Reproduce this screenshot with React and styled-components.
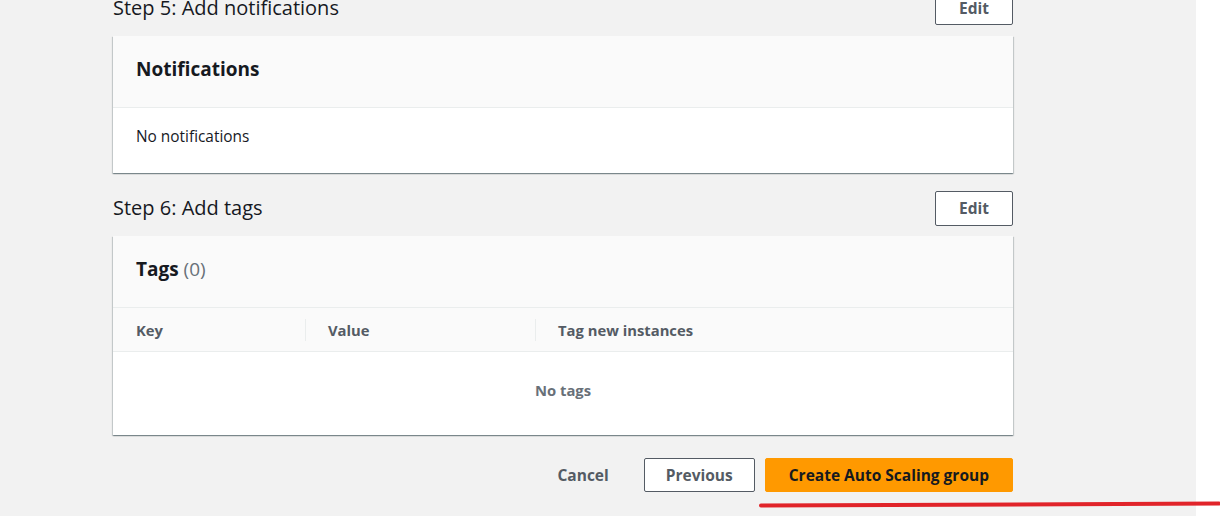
import React from "react";
import styled, { createGlobalStyle } from "styled-components";

const GlobalStyle = createGlobalStyle`
  html, body {
    margin: 0;
    padding: 0;
    height: 100%;
    overflow: hidden;
    background: #ffffff;
  }
  #root {
    height: 100%;
  }
  * {
    box-sizing: border-box;
  }
`;

const Layout = styled.div`
  position: relative;
  display: flex;
  height: 516px;
  font-family: "Open Sans", "Noto Sans", sans-serif;
  color: #16191f;
`;

const Main = styled.main`
  flex: 1;
  background: #f2f2f2;
  overflow: hidden;
`;

const SideStrip = styled.div`
  width: 24px;
  background: #ffffff;
`;

const Column = styled.div`
  width: 900px;
  margin: -9px 0 0 113px;
  display: flex;
  flex-direction: column;
  gap: 18px;
`;

const Section = styled.section`
  display: flex;
  flex-direction: column;
  gap: 11px;
`;

const SectionHead = styled.div`
  display: flex;
  align-items: center;
  justify-content: space-between;
  height: 34px;
`;

const StepTitle = styled.h2`
  margin: 0;
  font-size: 20px;
  font-weight: 400;
  line-height: 24px;
  color: #16191f;
`;

const Button = styled.button`
  height: ${(p) => (p.$tall ? "35px" : "34px")};
  padding: 0 ${(p) => (p.$pad ? p.$pad : 23)}px;
  border-radius: 2px;
  border: 1px solid ${(p) => (p.$primary ? "#ff9900" : p.$link ? "transparent" : "#545b64")};
  background: ${(p) => (p.$primary ? "#ff9900" : p.$link ? "transparent" : "#ffffff")};
  color: ${(p) => (p.$primary ? "#16191f" : "#545b64")};
  font-family: "Open Sans", "Noto Sans", sans-serif;
  font-size: 15.5px;
  font-weight: 700;
  line-height: 20px;
  cursor: pointer;
`;

const Card = styled.div`
  background: #ffffff;
  box-shadow: 0 1px 1px 0 rgba(0, 28, 36, 0.3), 1px 1px 1px 0 rgba(0, 28, 36, 0.15),
    -1px 1px 1px 0 rgba(0, 28, 36, 0.15);
`;

const CardHeader = styled.div`
  height: 72px;
  padding: 19px 23px 0;
  background: #fafafa;
  border-bottom: 1px solid #eaeded;
`;

const CardTitle = styled.h3`
  margin: 0;
  font-size: 19px;
  font-weight: 700;
  line-height: 28px;
  color: #16191f;
`;

const Count = styled.span`
  font-weight: 400;
  color: #687078;
`;

const CardBody = styled.div`
  height: 65px;
  padding: 19px 23px 0;
  font-size: 15.4px;
  line-height: 20px;
  color: #16191f;
`;

const TableHead = styled.div`
  display: grid;
  grid-template-columns: 192px 230px 1fr;
  height: 44px;
  align-items: center;
  border-bottom: 1px solid #eaeded;
  background: #fafafa;
`;

const HeadCell = styled.div`
  padding-left: 22px;
  font-size: 14.8px;
  font-weight: 700;
  line-height: 20px;
  color: #545b64;
  border-left: 1px solid ${(p) => (p.$divider ? "#eaeded" : "transparent")};
  height: 22px;
  display: flex;
  align-items: center;
`;

const EmptyRow = styled.div`
  height: 83px;
  padding-top: 28px;
  text-align: center;
  font-size: 14.8px;
  font-weight: 700;
  line-height: 20px;
  color: #687078;
`;

const Footer = styled.div`
  display: flex;
  justify-content: flex-end;
  align-items: center;
  gap: 10px;
  margin-top: 5px;
`;

const CancelWrap = styled.div`
  margin-right: 4px;
`;

const Annotation = styled.svg`
  position: absolute;
  left: 0;
  top: 0;
  pointer-events: none;
`;

export default function App() {
  return (
    <>
      <GlobalStyle />
      <Layout>
        <Main>
          <Column>
            <Section>
              <SectionHead>
                <StepTitle>Step 5: Add notifications</StepTitle>
                <Button>Edit</Button>
              </SectionHead>
              <Card>
                <CardHeader>
                  <CardTitle>Notifications</CardTitle>
                </CardHeader>
                <CardBody>No notifications</CardBody>
              </Card>
            </Section>

            <Section>
              <SectionHead>
                <StepTitle>Step 6: Add tags</StepTitle>
                <Button $tall>Edit</Button>
              </SectionHead>
              <Card>
                <CardHeader>
                  <CardTitle>
                    Tags <Count>(0)</Count>
                  </CardTitle>
                </CardHeader>
                <TableHead>
                  <HeadCell>Key</HeadCell>
                  <HeadCell $divider>Value</HeadCell>
                  <HeadCell $divider>Tag new instances</HeadCell>
                </TableHead>
                <EmptyRow>No tags</EmptyRow>
              </Card>
            </Section>

            <Footer>
              <CancelWrap>
                <Button $link $pad={20}>Cancel</Button>
              </CancelWrap>
              <Button $pad={21}>Previous</Button>
              <Button $primary>Create Auto Scaling group</Button>
            </Footer>
          </Column>
        </Main>
        <SideStrip />
        <Annotation width="1220" height="516" viewBox="0 0 1220 516">
          <path
            d="M761 505.5 Q 990 505 1219 503.5"
            fill="none"
            stroke="#e1242a"
            strokeWidth="4"
            strokeLinecap="round"
          />
        </Annotation>
      </Layout>
    </>
  );
}
